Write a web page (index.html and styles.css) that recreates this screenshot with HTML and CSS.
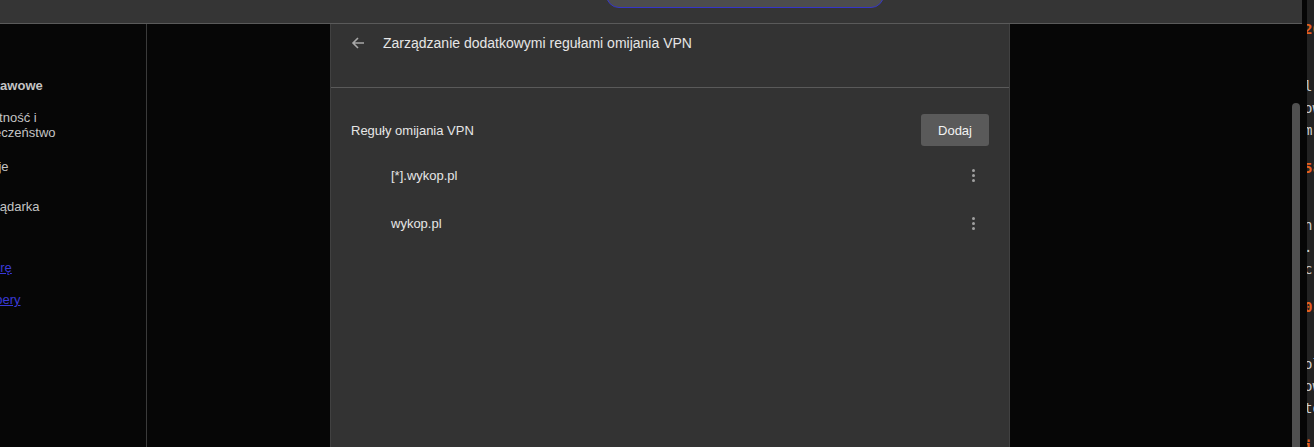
FILE: index.html
```html
<!DOCTYPE html>
<html lang="pl">

<head>
    <meta charset="UTF-8">
    <meta name="viewport" content="width=device-width, initial-scale=1.0">
    <title>Reguły omijania VPN</title>
    <link rel="stylesheet" href="styles.css">
</head>

<body>
    <div class="screen">
        <div class="app">
            <header class="topbar">
                <div class="search-box"></div>
            </header>

            <div class="content">
                <nav class="sidebar">
                    <ul class="nav-list">
                        <li class="nav-item nav-bold">Podstawowe</li>
                        <li class="nav-item">Prywatność i<br>bezpieczeństwo</li>
                        <li class="nav-item">Funkcje</li>
                        <li class="nav-item">Przeglądarka</li>
                    </ul>
                    <a class="side-link link-rate" href="#">Oceń Operę</a>
                    <a class="side-link link-help" href="#">Pomoc Opery</a>
                </nav>

                <div class="main">
                    <section class="dialog">
                        <div class="dialog-header">
                            <div class="title-row">
                                <svg class="back-icon" width="16" height="16" viewBox="0 0 16 16">
                                    <path d="M14 8H3M8 3L3 8l5 5" fill="none" stroke="#a8a8a8" stroke-width="1.6" />
                                </svg>
                                <h2 class="dialog-title">Zarządzanie dodatkowymi regułami omijania VPN</h2>
                            </div>
                        </div>

                        <div class="dialog-body">
                            <div class="rules-head">
                                <span class="rules-label">Reguły omijania VPN</span>
                                <button class="add-btn">Dodaj</button>
                            </div>

                            <ul class="rule-list">
                                <li class="rule-row">
                                    <span>[*].wykop.pl</span>
                                    <span class="kebab"><i></i><i></i><i></i></span>
                                </li>
                                <li class="rule-row">
                                    <span>wykop.pl</span>
                                    <span class="kebab"><i></i><i></i><i></i></span>
                                </li>
                            </ul>
                        </div>
                    </section>

                    <div class="side-space">
                        <div class="scroll-thumb"></div>
                    </div>
                </div>
            </div>
        </div>

        <div class="gap"></div>

        <div class="peek">
            <p class="peek-head">2023</p>
            <p class="peek-line">l</p>
            <p class="peek-line">ow</p>
            <p class="peek-line">m</p>
            <p class="peek-head">58</p>
            <p class="peek-line">n</p>
            <p class="peek-line">.</p>
            <p class="peek-line">c</p>
            <p class="peek-head">01</p>
            <p class="peek-line">ol</p>
            <p class="peek-line">ow</p>
            <p class="peek-line">to</p>
            <p class="peek-head">i</p>
        </div>
    </div>
</body>
</html>
```

FILE: styles.css
```css
:root {
    --page-bg: #060606;
    --bar-bg: #353535;
    --dialog-bg: #333333;
    --line: #5a5a5a;
    --text: #e6e6e6;
    --muted: #c4c4c4;
    --link: #3a3ad6;
    --accent: #e5611e;
}

* {
    margin: 0;
    padding: 0;
    box-sizing: border-box;
}

body {
    font-family: 'Liberation Sans', Arial, sans-serif;
    background-color: var(--page-bg);
    color: var(--text);
    overflow: hidden;
}

.screen {
    display: flex;
    width: 1314px;
    height: 447px;
    overflow: hidden;
}

.app {
    width: 1302px;
    display: flex;
    flex-direction: column;
}

.topbar {
    height: 24px;
    flex-shrink: 0;
    background-color: var(--bar-bg);
    border-bottom: 1px solid var(--line);
    padding-left: 606px;
}

.search-box {
    width: 278px;
    height: 28px;
    margin-top: -20px;
    background-color: #4d4d4d;
    border: 1px solid #3636c8;
    border-radius: 0 0 13px 13px;
}

.content {
    flex: 1;
    display: flex;
}

/* left settings menu, clipped by the window */
.sidebar {
    width: 147px;
    flex-shrink: 0;
    border-right: 1px solid #3a3a3a;
    overflow: hidden;
    white-space: nowrap;
    font-size: 13px;
    color: var(--muted);
}

.nav-list {
    list-style: none;
    margin-left: -37px;
    padding-top: 54px;
}

.nav-item {
    line-height: 15px;
}

.nav-bold {
    font-weight: bold;
    margin-left: 1px;
    margin-bottom: 17px;
}

.nav-item:nth-child(2) {
    margin-bottom: 19px;
}

.nav-item:nth-child(3) {
    margin-bottom: 25px;
}

.side-link {
    display: block;
    color: var(--link);
    font-size: 13px;
    line-height: 15px;
}

.link-rate {
    margin-top: 46px;
    margin-left: -59px;
}

.link-help {
    margin-top: 17px;
    margin-left: -59px;
}

.main {
    flex: 1;
    display: flex;
}

.dialog {
    width: 680px;
    margin-left: 183px;
    background-color: var(--dialog-bg);
    border-left: 1px solid #414141;
    border-right: 1px solid #414141;
}

.dialog-header {
    height: 64px;
    padding: 10px 20px 0 19px;
    border-bottom: 1px solid var(--line);
}

.title-row {
    display: flex;
    align-items: center;
    height: 18px;
}

.back-icon {
    margin-right: 17px;
}

.dialog-title {
    font-size: 14px;
    font-weight: normal;
    color: var(--text);
}

.dialog-body {
    padding: 26px 20px 0 20px;
}

.rules-head {
    display: flex;
    justify-content: space-between;
    align-items: center;
}

.rules-label {
    font-size: 13px;
}

.add-btn {
    width: 68px;
    height: 32px;
    background-color: #5a5a5a;
    color: #f2f2f2;
    border: none;
    border-radius: 3px;
    font-family: inherit;
    font-size: 13px;
}

.rule-list {
    list-style: none;
    margin-top: 5px;
}

.rule-row {
    height: 48px;
    display: flex;
    justify-content: space-between;
    align-items: center;
    padding-left: 40px;
    font-size: 13px;
}

.kebab {
    width: 32px;
    display: flex;
    flex-direction: column;
    align-items: center;
    gap: 2px;
}

.kebab i {
    width: 3px;
    height: 3px;
    border-radius: 50%;
    background-color: #a0a0a0;
}

.side-space {
    flex: 1;
    display: flex;
    justify-content: flex-end;
    padding: 79px 2px 0 0;
}

.scroll-thumb {
    width: 8px;
    background-color: #505050;
    border-radius: 4px 4px 0 0;
}

.gap {
    width: 5px;
}

/* sliver of the page behind */
.peek {
    width: 7px;
    background-color: #232323;
    overflow: hidden;
    white-space: nowrap;
    font-family: 'DejaVu Sans Mono', monospace;
    font-size: 14px;
    color: #cfcfcf;
    padding-top: 19px;
}

.peek p {
    margin-left: -3px;
}

.peek .peek-head {
    line-height: 20px;
    color: var(--accent);
    font-weight: bold;
    margin-bottom: 36px;
}

.peek .peek-line {
    line-height: 22px;
}

.peek .peek-line:nth-of-type(4n) {
    margin-bottom: 17px;
}
```
